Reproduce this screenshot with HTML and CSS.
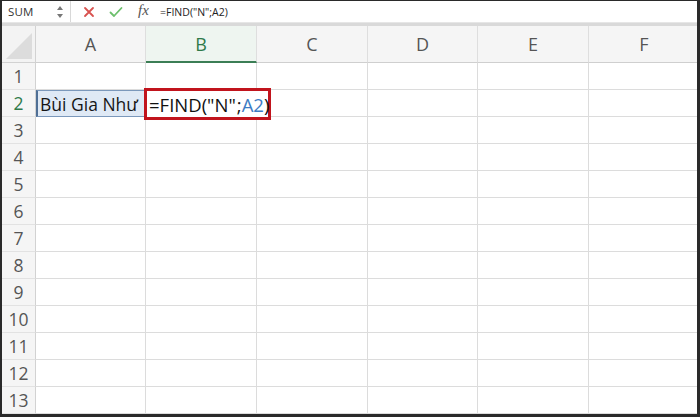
FILE: index.html
```html
<!DOCTYPE html>
<html>
<head>
<meta charset="utf-8">
<link rel="stylesheet" href="styles.css">
</head>
<body>
<div class="frame">
  <div class="fbar">
    <div class="namebox">
      <span class="name">SUM</span>
      <svg class="spin" width="8" height="14" viewBox="0 0 8 14"><path d="M4 1 L7 5 L1 5 Z" fill="#777"/><path d="M4 13 L7 9 L1 9 Z" fill="#777"/></svg>
    </div>
    <div class="fbtns">
      <svg width="12" height="12" viewBox="0 0 12 12"><path d="M2 2 L10 10 M10 2 L2 10" stroke="#d8524f" stroke-width="1.8" stroke-linecap="round"/></svg>
      <svg width="14" height="12" viewBox="0 0 14 12"><path d="M1.5 6.5 L5 10 L12.5 2" stroke="#6cbf6c" stroke-width="1.8" fill="none" stroke-linecap="round" stroke-linejoin="round"/></svg>
      <span class="fx">fx</span>
    </div>
    <div class="ftext">=FIND("N";A2)</div>
  </div>
  <div class="sep"></div>
  <div class="grid">
    <div class="corner"><div class="tri"></div></div>
    <div class="ch">A</div>
    <div class="ch sel">B</div>
    <div class="ch">C</div>
    <div class="ch">D</div>
    <div class="ch">E</div>
    <div class="ch">F</div>

    <div class="rh">1</div><div class="c"></div><div class="c"></div><div class="c"></div><div class="c"></div><div class="c"></div><div class="c"></div>
    <div class="rh act">2</div>
    <div class="c a2"><span>Bùi Gia Như</span></div>
    <div class="c b2"><div class="redbox"><span>=FIND("N"</span><span class="caret"></span><span>;</span><span class="ref">A2</span><span>)</span></div></div>
    <div class="c"></div><div class="c"></div><div class="c"></div><div class="c"></div>
    <div class="rh">3</div><div class="c"></div><div class="c"></div><div class="c"></div><div class="c"></div><div class="c"></div><div class="c"></div>
    <div class="rh">4</div><div class="c"></div><div class="c"></div><div class="c"></div><div class="c"></div><div class="c"></div><div class="c"></div>
    <div class="rh">5</div><div class="c"></div><div class="c"></div><div class="c"></div><div class="c"></div><div class="c"></div><div class="c"></div>
    <div class="rh">6</div><div class="c"></div><div class="c"></div><div class="c"></div><div class="c"></div><div class="c"></div><div class="c"></div>
    <div class="rh">7</div><div class="c"></div><div class="c"></div><div class="c"></div><div class="c"></div><div class="c"></div><div class="c"></div>
    <div class="rh">8</div><div class="c"></div><div class="c"></div><div class="c"></div><div class="c"></div><div class="c"></div><div class="c"></div>
    <div class="rh">9</div><div class="c"></div><div class="c"></div><div class="c"></div><div class="c"></div><div class="c"></div><div class="c"></div>
    <div class="rh">10</div><div class="c"></div><div class="c"></div><div class="c"></div><div class="c"></div><div class="c"></div><div class="c"></div>
    <div class="rh">11</div><div class="c"></div><div class="c"></div><div class="c"></div><div class="c"></div><div class="c"></div><div class="c"></div>
    <div class="rh">12</div><div class="c"></div><div class="c"></div><div class="c"></div><div class="c"></div><div class="c"></div><div class="c"></div>
    <div class="rh">13</div><div class="c"></div><div class="c"></div><div class="c"></div><div class="c"></div><div class="c"></div><div class="c"></div>
  </div>
</div>
</body>
</html>
```
FILE: styles.css
```css
* { box-sizing: border-box; }
html, body { margin: 0; padding: 0; background: #fff; }
body { font-family: "Open Sans", "Noto Sans", sans-serif; }
.frame {
  width: 700px; height: 417px; overflow: hidden;
  border-top: 1px solid #2a2a2a;
  border-left: 2px solid #2a2a2a;
  border-right: 3px solid #2a2a2a;
  border-bottom: 3px solid #2a2a2a;
  background: #fff;
  display: flex; flex-direction: column;
}
.fbar { height: 21px; display: flex; align-items: center; background: #fff; flex: none; }
.namebox {
  width: 69px; height: 21px; display: flex; align-items: center; justify-content: space-between;
  padding: 0 6px 0 6px; border-right: 1px solid #d8d8d8;
}
.name { font-size: 11.5px; color: #333; letter-spacing: 0.2px; }
.spin { margin-top: 1px; }
.fbtns { display: flex; align-items: center; gap: 14px; padding-left: 12px; width: 89px; }
.fx { font-family: "Liberation Serif", serif; font-style: italic; font-size: 15px; color: #555; margin-left: 1px; margin-top: -2px; }
.ftext { font-size: 10.5px; color: #222; padding-left: 0; }
.sep { height: 4px; background: #d9d9d9; border-top: 1px solid #e6e6e6; flex: none; }
.grid {
  display: grid;
  grid-template-columns: 34px 110px 111px 111px 110px 111px 111px;
  grid-template-rows: 37px repeat(13, 27px);
  flex: none;
}
.corner { background: #f3f3f3; border-right: 1px solid #d2d2d2; border-bottom: 1px solid #d2d2d2; position: relative; }
.tri {
  position: absolute; right: 3px; bottom: 3px; width: 0; height: 0;
  border-left: 26px solid transparent; border-bottom: 26px solid #dcdcdc;
}
.ch {
  background: #f5f5f5; border-right: 1px solid #dedede; border-bottom: 1px solid #cfcfcf;
  display: flex; align-items: center; justify-content: center;
  font-size: 18px; color: #555;
}
.ch.sel { background: #eef5f0; color: #2f7a4a; border-bottom: 2px solid #3b7e55; }
.rh {
  background: #f5f5f5; border-right: 1px solid #d2d2d2; border-bottom: 1px solid #e2e2e2;
  display: flex; align-items: center; justify-content: center;
  font-size: 17.5px; color: #555;
}
.rh.act { color: #2f7a4a; }
.c { border-right: 1px solid #dcdcdc; border-bottom: 1px solid #dcdcdc; position: relative; }
.a2 {
  background: #dfe9f5; border: 1px solid #7b98bb; border-left: 2px solid #4f6f95;
  display: flex; align-items: center; padding-left: 2px;
  font-size: 17.5px; color: #151515;
}
.b2 { overflow: visible; z-index: 2; }
.redbox {
  position: absolute; left: -2px; top: -2px; width: 127px; height: 32px;
  border: 3px solid #c1141d; background: #fff;
  display: flex; align-items: center; padding-left: 2px;
  font-size: 18.5px; color: #111; white-space: nowrap;
}
.caret { display: inline-block; width: 1px; height: 20px; background: #222; margin: 0 0 0 1px; }
.ref { color: #3d7cc4; }
```
